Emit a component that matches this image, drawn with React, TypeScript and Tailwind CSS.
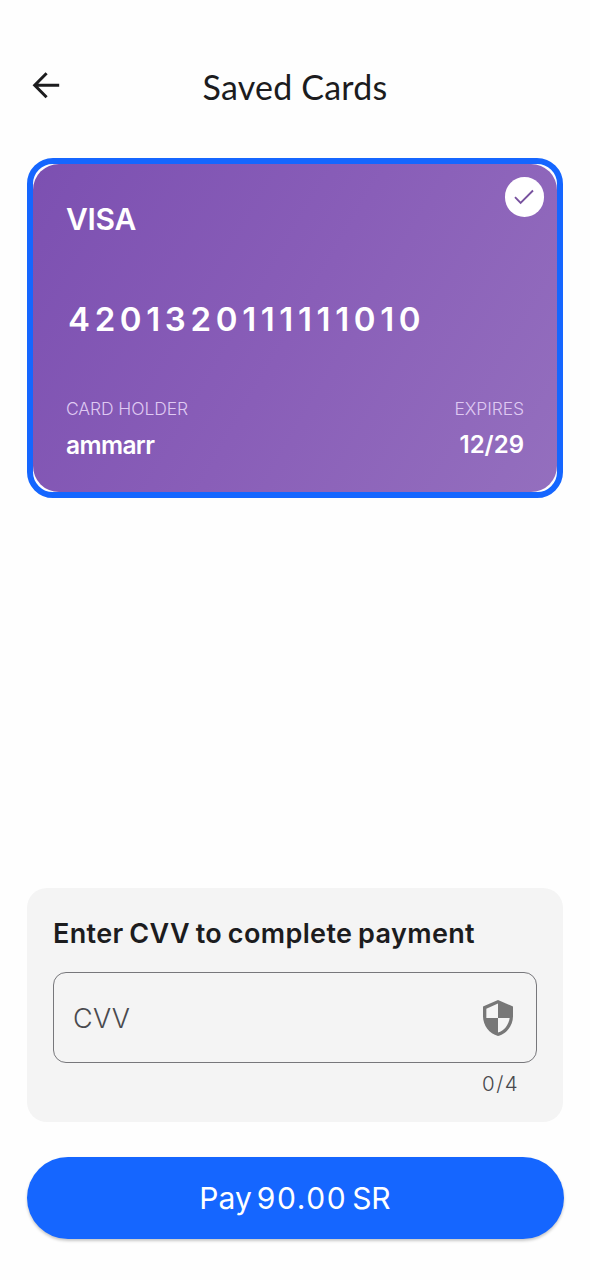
function BackArrow() {
  return (
    <svg viewBox="0 0 28 28" className="h-7 w-7" fill="none" stroke="#1c1c1e" strokeWidth="3">
      <path d="M27.2 14.2H3M14.6 2.2L2.7 14.2L14.6 26.2" />
    </svg>
  );
}

function Shield() {
  return (
    <svg viewBox="3 1 18 22" className="h-[36px] w-[30px]" preserveAspectRatio="none" fill="#777777">
      <path d="M12 1L3 5v6c0 5.55 3.84 10.74 9 12 5.16-1.26 9-6.45 9-12V5l-9-4zm0 10.99h7c-.53 4.12-3.28 7.79-7 8.94V12H5V6.3l7-3.11v8.8z" />
    </svg>
  );
}

function SavedCard() {
  return (
    <section className="mx-[27px] h-[340px] rounded-[26px] border-[6px] border-[#1566ff]">
      <div className="relative flex h-full flex-col rounded-[26px] bg-[linear-gradient(120deg,#7c50b1_0%,#895eb8_50%,#946fbe_100%)] px-[33px] text-white">
        <div className="mt-[37px] text-[30px] leading-9 font-semibold tracking-[-0.3px]">VISA</div>
        <div className="mt-[62px] ml-[2px] text-[33px] leading-10 font-semibold tracking-[4.65px] whitespace-nowrap">
          4201320111111010
        </div>
        <div className="mt-[58px] flex justify-between">
          <div>
            <div className="text-[17.5px] leading-6 font-light tracking-[-0.1px] text-[#dfc9f2]">CARD HOLDER</div>
            <div className="mt-2 text-[24.5px] leading-8 font-semibold tracking-[-0.6px]">ammarr</div>
          </div>
          <div className="text-right">
            <div className="text-[17.5px] leading-6 font-light tracking-[-0.1px] text-[#dfc9f2]">EXPIRES</div>
            <div className="mt-2 text-[24px] leading-8 font-semibold">12/29</div>
          </div>
        </div>
        <div className="absolute top-[13px] right-[13px] flex h-[39.5px] w-[39.5px] items-center justify-center rounded-full bg-white">
          <svg viewBox="0 0 20 16" className="h-4 w-5" fill="none" stroke="#78529f" strokeWidth="1.9">
            <path d="M1 8.2L6.6 13.8L19 1.5" />
          </svg>
        </div>
      </div>
    </section>
  );
}

export default function App() {
  return (
    <main className="flex h-[1280px] w-[590px] flex-col overflow-hidden bg-[#fefefe] font-['Inter',sans-serif] text-[#1c1c1e]">
      <header className="mt-[62px] grid h-[50px] grid-cols-[1fr_auto_1fr] items-center">
        <button aria-label="Back" className="-mt-1 ml-8 w-7">
          <BackArrow />
        </button>
        <h1 className="font-['Lato',sans-serif] text-[34px] leading-[50px] font-normal tracking-[0.2px]">Saved Cards</h1>
        <span />
      </header>
      <div className="mt-[46px]">
        <SavedCard />
      </div>
      <section className="mx-[27px] mt-auto h-[234px] rounded-[20px] bg-[#f4f4f4] px-[26px]">
        <h2 className="mt-[28px] text-[27px] leading-9 font-semibold tracking-[0.37px] whitespace-nowrap [word-spacing:-1.5px]">
          Enter CVV to complete payment
        </h2>
        <div className="mt-[20px] flex h-[91px] items-center justify-between rounded-[13px] border-[1.5px] border-[#77777b] pr-[23.5px] pl-[19px]">
          <span className="pt-[3px] text-[27px] leading-9 font-light tracking-[0.3px] text-[#4a4a4e]">CVV</span>
          <Shield />
        </div>
        <div className="mt-[9px] mr-[18px] text-right text-[20.5px] leading-6 font-light tracking-[1.4px] text-[#48484c]">0/4</div>
      </section>
      <button className="mx-[26.5px] mt-[35px] mb-[41px] h-[82px] shrink-0 rounded-full bg-[#1566ff] text-[30px] leading-9 font-normal text-white shadow-[0_2px_3px_rgba(0,0,0,0.22)] [word-spacing:-3.5px]">
        Pay <span className="tracking-[1.6px]">90.00</span> SR
      </button>
    </main>
  );
}
